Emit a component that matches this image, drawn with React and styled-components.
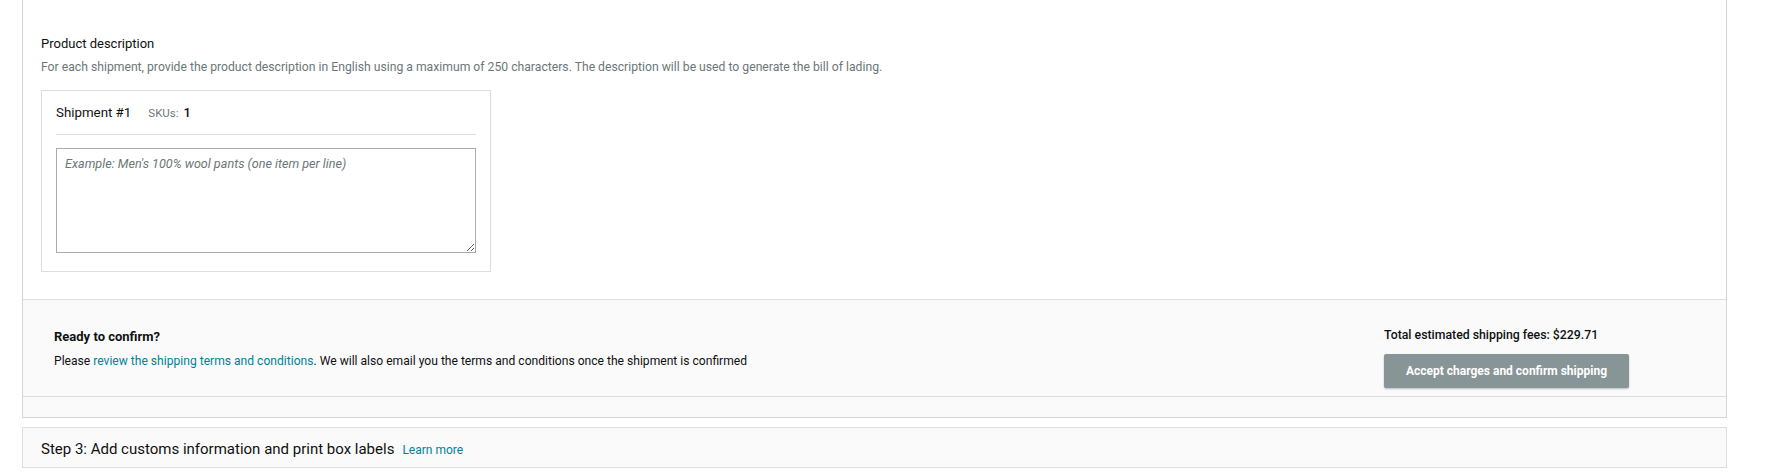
import React from "react";
import styled, { createGlobalStyle } from "styled-components";

const GlobalStyle = createGlobalStyle`
  * {
    box-sizing: border-box;
  }
  body {
    margin: 0;
    background: #fff;
    color: #0f1111;
    font-family: Roboto, "Liberation Sans", Arial, sans-serif;
  }
`;

const Page = styled.div`
  padding: 0 54px 0 22px;
`;

const Panel = styled.div`
  border: 1px solid #d5d5d5;
  border-top: none;
`;

const WhiteSection = styled.div`
  padding: 35px 18px 27px;
  background: #fff;
`;

const Title = styled.h3`
  margin: 0;
  font-size: 13px;
  line-height: 18px;
  font-weight: 400;
  color: #0f1111;
`;

const Hint = styled.p`
  margin: 6px 0 0;
  font-size: 12.2px;
  line-height: 16px;
  color: #6c7778;
`;

const Card = styled.div`
  width: 450px;
  margin-top: 15px;
  padding: 0 14px 18px;
  border: 1px solid #dddddd;
`;

const CardHeader = styled.div`
  display: flex;
  align-items: center;
  height: 44px;
  border-bottom: 1px solid #dddddd;
`;

const ShipmentName = styled.span`
  font-size: 13.3px;
  color: #0f1111;
  margin-right: 17px;
`;

const SkuLabel = styled.span`
  font-size: 11.5px;
  color: #6c7778;
  margin-right: 5px;
`;

const SkuCount = styled.span`
  font-size: 13px;
  font-weight: 500;
  color: #0f1111;
`;

const DescriptionInput = styled.textarea`
  display: block;
  width: 100%;
  height: 105px;
  margin-top: 13px;
  padding: 7px 8px;
  border: 1px solid #a6acaf;
  border-radius: 0;
  font-family: inherit;
  font-size: 12.6px;
  line-height: 16px;
  color: #0f1111;
  resize: both;
  outline: none;

  &::placeholder {
    font-style: italic;
    color: #6c7778;
  }
`;

const ConfirmSection = styled.div`
  display: flex;
  justify-content: space-between;
  align-items: flex-start;
  height: 98px;
  padding: 27px 97px 0 31px;
  background: #fafafa;
  border-top: 1px solid #dddddd;
  border-bottom: 1px solid #dddddd;
`;

const ConfirmText = styled.div`
  padding-top: 1px;
`;

const ConfirmHeading = styled.div`
  font-size: 13px;
  line-height: 18px;
  font-weight: 700;
  color: #0f1111;
`;

const ConfirmBody = styled.p`
  margin: 7px 0 0;
  font-size: 12.1px;
  line-height: 17px;
  color: #0f1111;
`;

const Link = styled.a`
  color: #008296;
  text-decoration: none;
  cursor: pointer;
`;

const FeesColumn = styled.div`
  width: 245px;
`;

const FeesTotal = styled.div`
  font-size: 12.3px;
  line-height: 17px;
  font-weight: 500;
  color: #0f1111;
`;

const ConfirmButton = styled.button`
  display: block;
  width: 245px;
  height: 34px;
  margin-top: 10px;
  border: none;
  border-radius: 2px;
  background: #879596;
  box-shadow: 0 1px 2px rgba(0, 0, 0, 0.25);
  color: #fff;
  font-family: inherit;
  font-size: 12px;
  font-weight: 700;
  cursor: pointer;
`;

const Strip = styled.div`
  height: 20px;
  background: #fafafa;
`;

const StepBox = styled.div`
  display: flex;
  align-items: baseline;
  gap: 8px;
  margin-top: 9px;
  height: 41px;
  padding: 12px 18px 0;
  border: 1px solid #dddddd;
  background: #fafafa;
`;

const StepTitle = styled.span`
  font-size: 15px;
  line-height: 19px;
  color: #0f1111;
`;

const StepLink = styled(Link)`
  font-size: 12px;
`;

const App = () => {
  return (
    <>
      <GlobalStyle />
      <Page>
        <Panel>
          <WhiteSection>
            <Title>Product description</Title>
            <Hint>
              For each shipment, provide the product description in English
              using a maximum of 250 characters. The description will be used
              to generate the bill of lading.
            </Hint>
            <Card>
              <CardHeader>
                <ShipmentName>Shipment #1</ShipmentName>
                <SkuLabel>SKUs:</SkuLabel>
                <SkuCount>1</SkuCount>
              </CardHeader>
              <DescriptionInput placeholder="Example: Men's 100% wool pants (one item per line)" />
            </Card>
          </WhiteSection>
          <ConfirmSection>
            <ConfirmText>
              <ConfirmHeading>Ready to confirm?</ConfirmHeading>
              <ConfirmBody>
                Please <Link>review the shipping terms and conditions</Link>.
                We will also email you the terms and conditions once the
                shipment is confirmed
              </ConfirmBody>
            </ConfirmText>
            <FeesColumn>
              <FeesTotal>Total estimated shipping fees: $229.71</FeesTotal>
              <ConfirmButton>Accept charges and confirm shipping</ConfirmButton>
            </FeesColumn>
          </ConfirmSection>
          <Strip />
        </Panel>
        <StepBox>
          <StepTitle>Step 3: Add customs information and print box labels</StepTitle>
          <StepLink>Learn more</StepLink>
        </StepBox>
      </Page>
    </>
  );
};

export default App;
